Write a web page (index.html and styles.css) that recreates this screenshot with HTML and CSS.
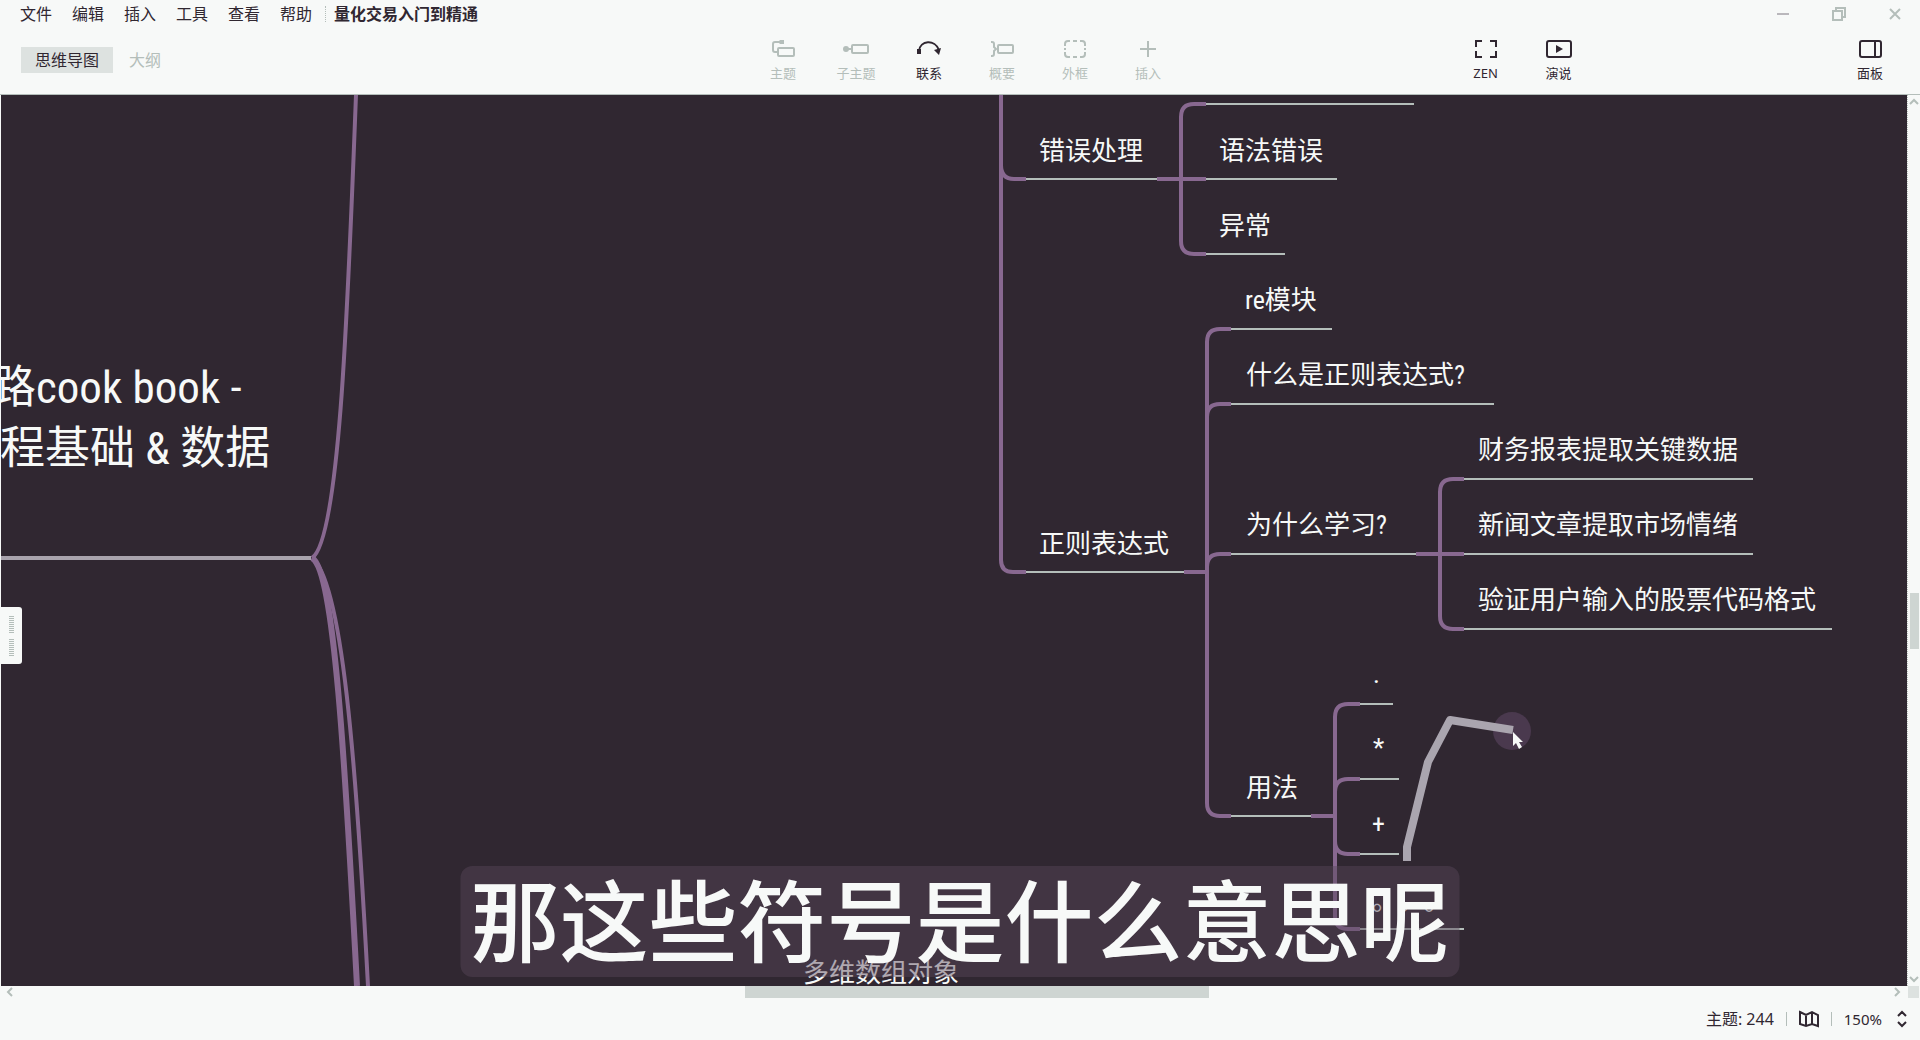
FILE: index.html
```html
<!DOCTYPE html>
<html lang="zh-CN">
<head>
<meta charset="utf-8">
<title>量化交易入门到精通</title>
<link rel="stylesheet" href="styles.css">
</head>
<body>
<div class="app">
  <header class="titlebar">
    <nav class="menu">
      <button>文件</button><button>编辑</button><button>插入</button><button>工具</button><button>查看</button><button>帮助</button>
    </nav>
    <h1 class="doc-title">量化交易入门到精通</h1>
    <div class="window-controls">
      <button aria-label="最小化"><svg width="14" height="14"><path class="dark" d="M1 7H13"/></svg></button>
      <button aria-label="还原"><svg width="14" height="14"><path d="M1 4H10V13H1ZM4 4V1H13V10H10"/></svg></button>
      <button aria-label="关闭"><svg width="14" height="14"><path d="M2 2L12 12M12 2L2 12"/></svg></button>
    </div>
  </header>

  <div class="toolbar">
    <div class="tabs">
      <button class="tab active">思维导图</button>
      <button class="tab">大纲</button>
    </div>
    <div class="tools">
      <button class="tool" disabled><svg width="26" height="22"><path d="M9 4H5Q3 4 3 6V12Q3 14 5 14H7"/><path class="solid" d="M8 4L10 2H14V6H10Z"/><rect x="8" y="10" width="16" height="8" rx="1"/></svg>主题</button>
      <button class="tool" disabled><svg width="26" height="22"><path d="M5 11H10"/><circle class="solid" cx="3" cy="11" r="3"/><rect x="9" y="7" width="16" height="8" rx="1"/></svg>子主题</button>
      <button class="tool"><svg width="26" height="22"><path d="M3 13C4 2 19 1 23 12"/><path class="solid" d="M1 11H5V16H1ZM18 12L25 10L23 17Z"/></svg>联系</button>
      <button class="tool" disabled><svg width="26" height="22"><path d="M2 4H3Q5 4 5 6V9L7 11L5 13V16Q5 18 3 18H2"/><rect x="9" y="7" width="15" height="8" rx="1"/></svg>概要</button>
      <button class="tool" disabled><svg width="26" height="22"><path d="M3 8V6Q3 3 6 3H8M11 3H15M18 3H20Q23 3 23 6V8M23 14V16Q23 19 20 19H18M15 19H11M8 19H6Q3 19 3 16V14M3 10V12M23 10V12"/></svg>外框</button>
      <button class="tool" disabled><svg width="26" height="22"><path d="M13 3V19M5 11H21"/></svg>插入</button>
    </div>
    <div class="tools right">
      <button class="tool"><svg width="26" height="22"><path d="M3 9V3H9M17 3H23V9M23 13V19H17M9 19H3V13"/></svg>ZEN</button>
      <button class="tool"><svg width="26" height="22"><rect x="1" y="3" width="24" height="16" rx="2"/><path class="solid" d="M10 7L17 11L10 15Z"/></svg>演说</button>
      <button class="tool panel"><svg width="26" height="22"><rect x="3" y="3" width="21" height="16" rx="2"/><path d="M18 3V19"/></svg>面板</button>
    </div>
  </div>

  <main class="workspace">
    <div class="canvas">
      <svg class="map" role="img" aria-label="思维导图">
        <g transform="translate(-1 -95)">
          <g class="branch">
            <path d="M312 558C340 540 348 300 356 95"/>
            <path class="heavy" d="M312 558C334 570 345 760 357 986"/>
            <path d="M312 558C342 580 356 760 368 986"/>
            <path d="M1001 95V560Q1001 572 1013 572H1026M1001 165Q1001 179 1014 179H1026"/>
            <path d="M1157 179H1206M1206 104H1194Q1181 104 1181 117V241Q1181 254 1194 254H1206"/>
            <path d="M1184 572H1207M1231 329H1220Q1207 329 1207 342V803Q1207 816 1220 816H1231"/>
            <path d="M1231 404H1220Q1207 404 1207 417M1231 554H1220Q1207 554 1207 567"/>
            <path d="M1416 554H1464M1464 479H1453Q1440 479 1440 492V616Q1440 629 1453 629H1464"/>
            <path d="M1311 816H1335M1360 704H1348Q1335 704 1335 717V916Q1335 929 1348 929H1360"/>
            <path d="M1360 779H1348Q1335 779 1335 792M1360 854H1348Q1335 854 1335 841"/>
          </g>
          <path class="root-line" d="M0 558H311"/>
          <path class="underline" d="M1026 179H1157M1206 104H1414M1206 179H1337M1206 254H1285M1231 329H1332M1231 404H1494M1231 554H1416M1464 479H1753M1464 554H1753M1464 629H1832M1026 572H1184M1231 816H1311M1360 704H1393M1360 779H1399M1360 854H1399M1360 929H1464"/>
          <g class="root">
            <text x="-9" y="403">路cook book -</text>
            <text x="0" y="464">程基础 &amp; 数据</text>
          </g>
          <g class="topic">
            <text x="1039" y="160">错误处理</text>
            <text x="1219" y="160">语法错误</text>
            <text x="1219" y="235">异常</text>
            <text x="1245" y="309">re模块</text>
            <text x="1246" y="384">什么是正则表达式?</text>
            <text x="1246" y="534">为什么学习?</text>
            <text x="1039" y="553">正则表达式</text>
            <text x="1478" y="459">财务报表提取关键数据</text>
            <text x="1478" y="534">新闻文章提取市场情绪</text>
            <text x="1478" y="609">验证用户输入的股票代码格式</text>
            <text x="1246" y="797">用法</text>
            <text x="1373" y="683">.</text>
            <text x="1373" y="757">*</text>
            <text x="1372" y="833">+</text>
            <text x="1372" y="910">。。。</text>
            <text x="803" y="982">多维数组对象</text>
          </g>
          <circle class="halo" cx="1512" cy="731" r="19"/>
          <path class="pen" d="M1407 861V847L1428 762L1450 720L1513 730"/>
          <path class="cursor" d="M1513 732V746L1516 743L1519 749L1522 747L1519 742H1523Z"/>
        </g>
      </svg>
      <button class="drawer" aria-label="展开"><span></span><span></span></button>
      <p class="caption">那这些符号是什么意思呢</p>
    </div>
    <div class="vscroll">
      <svg width="12" height="14"><path d="M2 9L6 5L10 9"/></svg>
      <span class="thumb"></span>
      <svg width="12" height="14"><path d="M2 5L6 9L10 5"/></svg>
    </div>
    <div class="hscroll">
      <svg width="12" height="12"><path d="M8 2L4 6L8 10"/></svg>
      <span class="thumb"></span>
      <svg width="12" height="12"><path d="M4 2L8 6L4 10"/></svg>
    </div>
    <span class="corner"></span>
  </main>

  <footer class="status">
    <span class="count">主题: 244</span>
    <i class="sep"></i>
    <button aria-label="导航图"><svg width="20" height="18"><path d="M1 2L7 5L13 2L19 5V16L13 14L7 16L1 14ZM7 5V16M13 2V14"/></svg></button>
    <i class="sep"></i>
    <button class="zoom">150%<svg width="12" height="18"><path d="M2 6L6 2L10 6M2 12L6 16L10 12"/></svg></button>
  </footer>
</div>
</body>
</html>
```
FILE: styles.css
```css
* { box-sizing: border-box; }
body {
  margin: 0;
  background: #f7f9f8;
  color: #302731;
  font: 16px/20px "Noto Sans", "Noto Sans CJK SC", sans-serif;
}
button {
  border: 0;
  padding: 0;
  background: none;
  color: inherit;
  font: inherit;
}
svg { display: block; fill: none; stroke: currentColor; stroke-width: 2; }
.app { display: flex; flex-direction: column; height: 100vh; }

.titlebar { display: flex; align-items: center; height: 28px; padding: 0 18px 0 20px; }
.menu { display: flex; gap: 20px; }
.menu button { width: 32px; white-space: nowrap; }
.doc-title {
  margin: 0 0 0 13px;
  padding-left: 8px;
  border-left: 1px dotted #b4beba;
  font-size: 16px;
  line-height: 16px;
  font-weight: 700;
}
.window-controls { display: flex; gap: 42px; margin-left: auto; color: #b4beba; }
.window-controls .dark { stroke: #7d7680; stroke-width: 1; }

.toolbar {
  display: grid;
  grid-template-columns: 1fr auto 1fr;
  align-items: center;
  height: 67px;
  padding: 0 10px 2px 21px;
  border-bottom: 1px solid #b4beba;
}
.tabs { display: flex; align-items: center; }
.tab { height: 26px; padding: 0 16px; color: #b4beba; }
.tab.active { background: #dde2e0; color: #302731; padding: 0 14px; }
.tools { display: flex; }
.tool {
  display: flex;
  flex-direction: column;
  align-items: center;
  gap: 4px;
  width: 73px;
  font-size: 13px;
  line-height: 18px;
}
.tool:disabled { color: #b4beba; }
.solid { fill: currentColor; stroke: none; }
.tools.right { justify-content: flex-end; }
.panel { width: 80px; margin-left: 235px; }

.workspace {
  flex: 1;
  min-height: 0;
  display: grid;
  grid-template: minmax(0, 1fr) 12px / minmax(0, 1fr) 13px;
}
.canvas {
  position: relative;
  overflow: hidden;
  margin-left: 1px;
  background: #302731;
}
.map { width: 100%; height: 100%; stroke: none; }
.branch { stroke: #886890; stroke-width: 4; }
.branch .heavy { stroke-width: 6; }
.root-line { stroke: #a9a3ad; stroke-width: 4; }
.underline { stroke: #b4beba; stroke-width: 2; }
.root, .topic {
  fill: #f7f9f8;
  font-family: "Roboto Condensed", Roboto, "Noto Sans CJK SC", sans-serif;
  text-spacing-trim: space-all;
}
.root { font-size: 45px; }
.topic { font-size: 26px; }
.pen { stroke: #aaa5af; stroke-width: 8; stroke-linejoin: round; }
.halo { fill: #4a394e; }
.cursor { fill: #f7f9f8; }
.drawer {
  position: absolute;
  left: -1px;
  top: 512px;
  display: flex;
  flex-direction: column;
  align-items: center;
  justify-content: center;
  gap: 6px;
  width: 22px;
  height: 57px;
  border-radius: 0 3px 3px 0;
  background: #f7f9f8;
}
.drawer span {
  width: 5px;
  height: 17px;
  background: repeating-linear-gradient(#b4beba 0 1px, #f7f9f8 1px 2px);
}
.caption {
  position: absolute;
  left: 50%;
  bottom: 9px;
  transform: translateX(6px) translateX(-50%);
  margin: 0;
  padding: 0 10px 10px;
  border-radius: 12px;
  background: rgba(88, 70, 92, .45);
  color: #f7f9f8;
  font: 500 89px/101px "Noto Sans CJK SC", sans-serif;
  white-space: nowrap;
}

.vscroll, .hscroll { display: flex; align-items: center; color: #b4beba; }
.vscroll { flex-direction: column; justify-content: space-between; border-left: 1px dotted #b4beba; }
.hscroll { justify-content: space-between; padding: 0 4px; }
.vscroll svg, .hscroll svg { flex: none; }
.thumb { background: #ced5d2; }
.vscroll .thumb { width: 9px; height: 56px; margin-top: 160px; }
.hscroll .thumb { width: 464px; height: 12px; margin-left: 46px; }
.corner { margin: 0 1px; background: #dde2e0; }

.status {
  display: flex;
  align-items: center;
  justify-content: flex-end;
  gap: 12px;
  height: 42px;
  padding: 0 12px 0 0;
}
.sep { height: 14px; border-left: 1px solid #b4beba; }
.zoom { display: flex; align-items: center; gap: 14px; font-size: 15px; }
```
